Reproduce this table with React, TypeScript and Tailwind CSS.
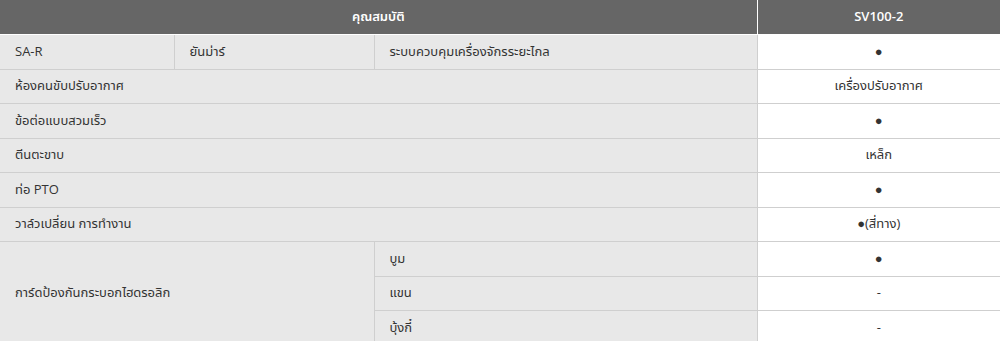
import React from "react";

const font = { fontFamily: '"Open Sans", "Noto Sans", "Noto Sans Thai", sans-serif' };

export default function App() {
  const left = "bg-[#e8e8e8] text-[#333] text-[13px] px-[15px] border border-[#cfcfcf] text-left font-normal";
  const right = "bg-white text-[#333] text-[13px] px-[15px] border border-[#cfcfcf] text-center";
  return (
    <div className="w-[1000px] bg-white" style={font}>
      <table className="w-full border-collapse table-fixed">
        <colgroup>
          <col className="w-[174px]" />
          <col className="w-[200px]" />
          <col className="w-[383px]" />
          <col className="w-[243px]" />
        </colgroup>
        <thead>
          <tr className="h-[34px]">
            <th colSpan={3} className="bg-[#666666] text-white text-[13px] font-semibold text-center border-b border-r border-white">
              คุณสมบัติ
            </th>
            <th className="bg-[#666666] text-white text-[13px] font-semibold text-center border-b border-white">
              SV100-2
            </th>
          </tr>
        </thead>
        <tbody>
          <tr className="h-[35px]">
            <td className={`${left} border-l-0`}>SA-R</td>
            <td className={left}>ยันม่าร์</td>
            <td className={left}>ระบบควบคุมเครื่องจักรระยะไกล</td>
            <td className={`${right} border-r-0`}>●</td>
          </tr>
          <tr className="h-[34px]">
            <td colSpan={3} className={`${left} border-l-0`}>ห้องคนขับปรับอากาศ</td>
            <td className={`${right} border-r-0`}>เครื่องปรับอากาศ</td>
          </tr>
          <tr className="h-[35px]">
            <td colSpan={3} className={`${left} border-l-0`}>ข้อต่อแบบสวมเร็ว</td>
            <td className={`${right} border-r-0`}>●</td>
          </tr>
          <tr className="h-[34px]">
            <td colSpan={3} className={`${left} border-l-0`}>ตีนตะขาบ</td>
            <td className={`${right} border-r-0`}>เหล็ก</td>
          </tr>
          <tr className="h-[35px]">
            <td colSpan={3} className={`${left} border-l-0`}>ท่อ PTO</td>
            <td className={`${right} border-r-0`}>●</td>
          </tr>
          <tr className="h-[34px]">
            <td colSpan={3} className={`${left} border-l-0`}>วาล์วเปลี่ยน การทำงาน</td>
            <td className={`${right} border-r-0`}>●(สี่ทาง)</td>
          </tr>
          <tr className="h-[35px]">
            <td colSpan={2} rowSpan={3} className={`${left} border-l-0`}>การ์ดป้องกันกระบอกไฮดรอลิก</td>
            <td className={left}>บูม</td>
            <td className={`${right} border-r-0`}>●</td>
          </tr>
          <tr className="h-[34px]">
            <td className={left}>แขน</td>
            <td className={`${right} border-r-0`}>-</td>
          </tr>
          <tr className="h-[35px]">
            <td className={left}>บุ้งกี๋</td>
            <td className={`${right} border-r-0`}>-</td>
          </tr>
        </tbody>
      </table>
    </div>
  );
}
